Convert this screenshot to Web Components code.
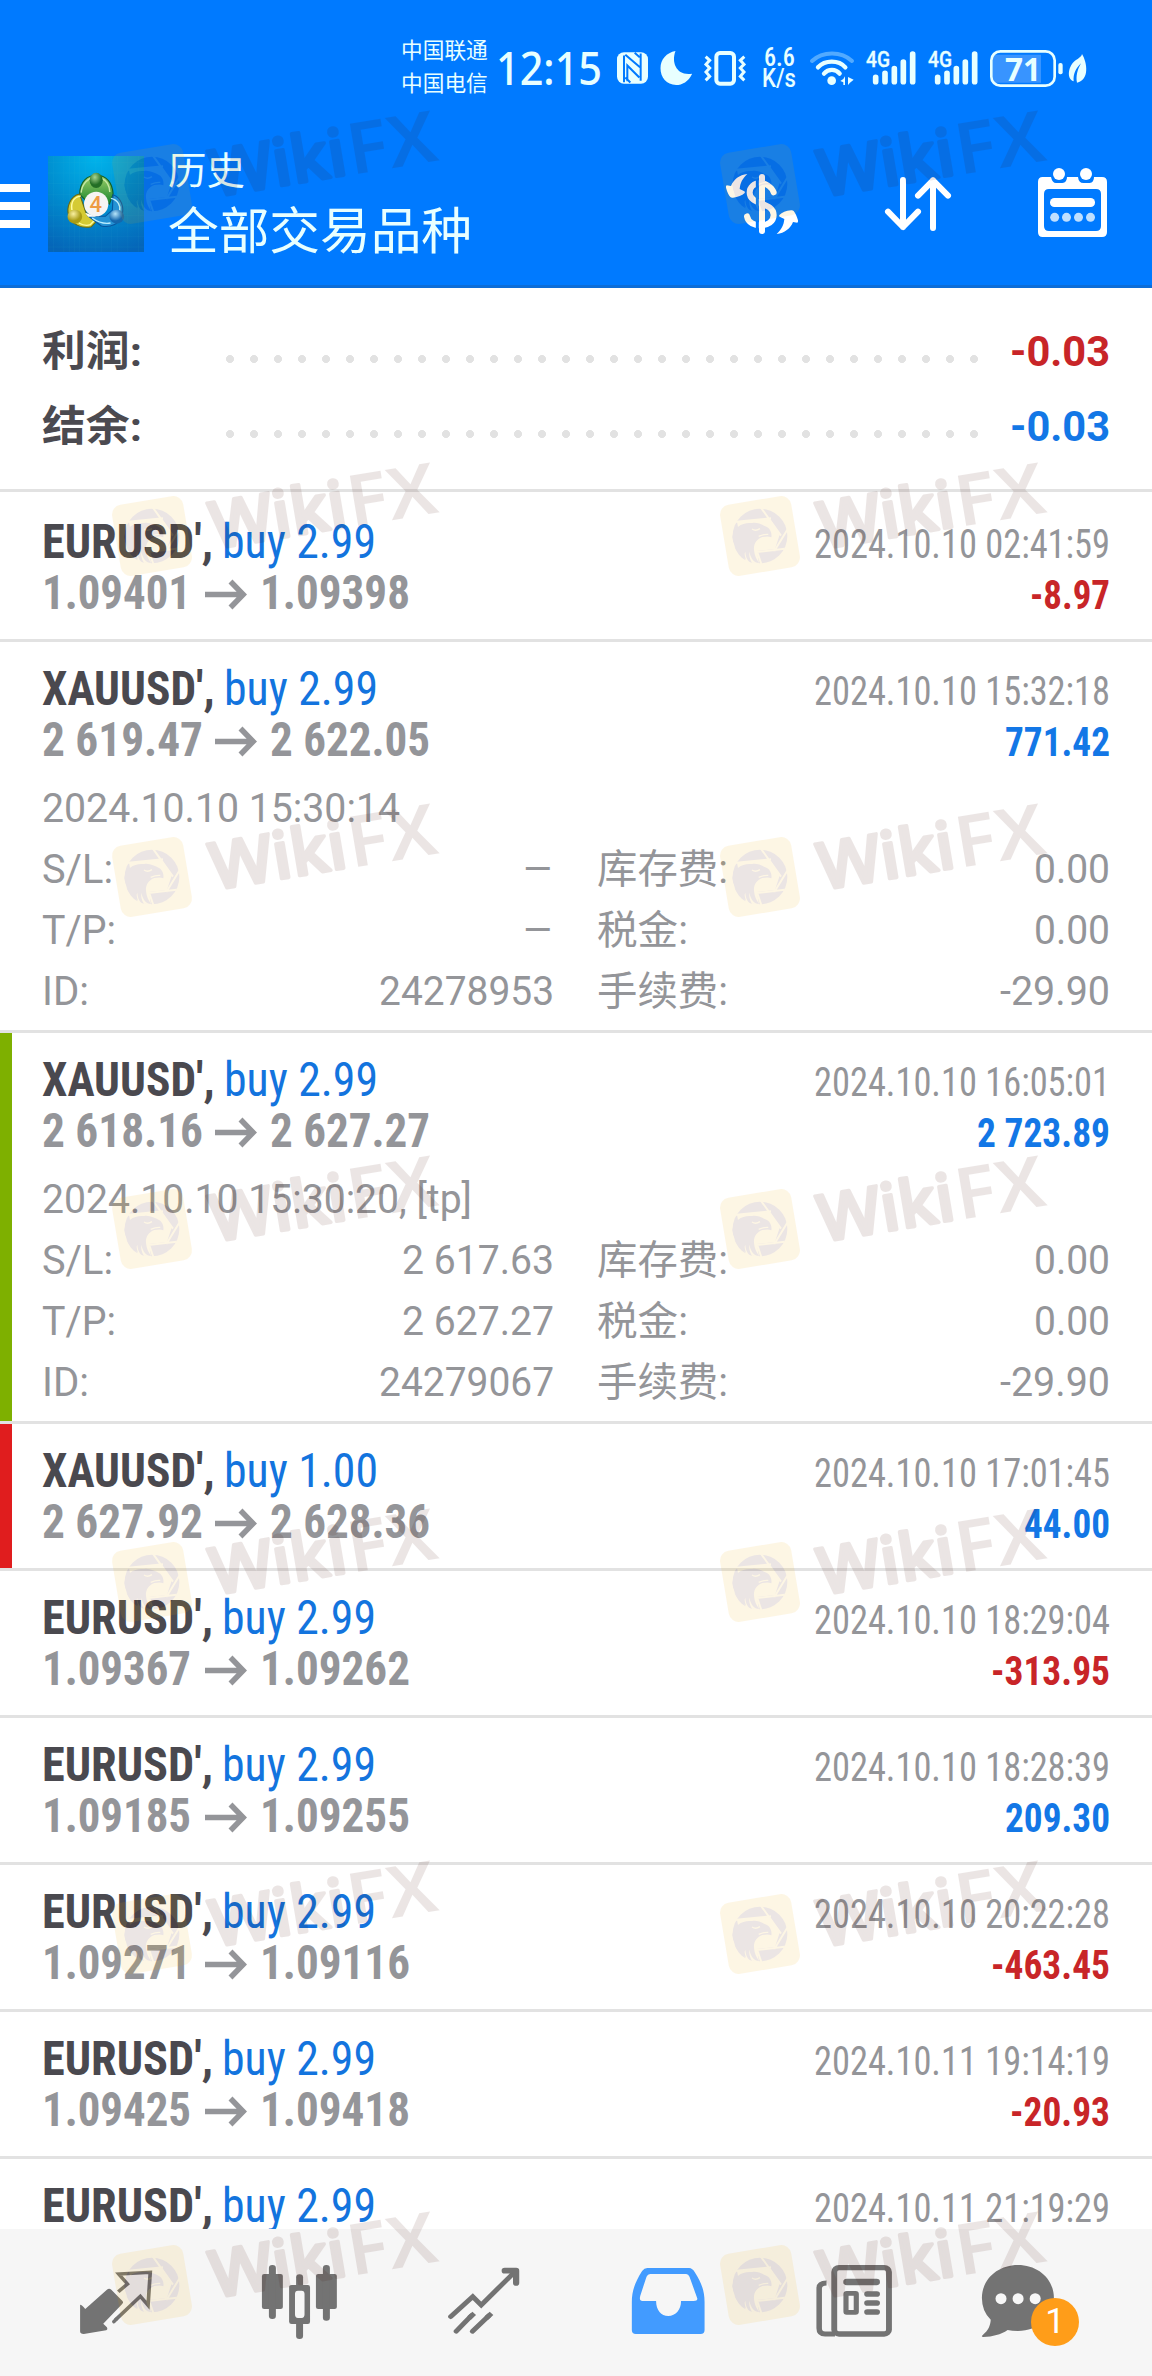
<!DOCTYPE html>
<html lang="zh-CN">
<head>
<meta charset="utf-8">
<title>历史</title>
<style>
html,body{margin:0;padding:0;background:#fff}
body{width:1152px;height:2376px;overflow:hidden;font-family:Roboto,"Noto Sans CJK SC",sans-serif}
</style>
</head>
<body>
<history-app></history-app>
<script>
const define = (name, html, setup) => {
  const t = document.createElement('template');
  t.innerHTML = html;
  customElements.define(name, class extends HTMLElement {
    connectedCallback() {
      if (this.shadowRoot) return;
      this.attachShadow({mode: 'open'}).append(t.content.cloneNode(true));
      if (setup) setup.call(this, this.shadowRoot);
    }
  });
};

/* One line of text, condensed to the width in its w attribute */
define('fit-text', `<style>
:host{display:block;white-space:nowrap;flex:none}
span{display:inline-block;transform-origin:0 50%;font-stretch:75%}
:host([normal]) span{font-stretch:100%}
</style><span><slot></slot></span>`, function (r) {
  const w = +this.getAttribute('w'), s = r.querySelector('span');
  this.style.width = w + 'px';
  s.style.transform = 'scaleX(' + w / s.getBoundingClientRect().width + ')';
});

define('signal-bars', `<style>
:host{display:block;width:51px;height:34px;flex:none}
svg{display:block;overflow:visible}
</style><svg width="51" height="34" viewBox="0 0 153 102"><g stroke="#e8ffff" stroke-width="17" stroke-linecap="round"><path d="M29 79V92M57 67V92M85 53V92M112 33V92M140 9V92"/></g>
<text x="0" y="48" textLength="72" lengthAdjust="spacingAndGlyphs" font-family="Roboto" font-weight="500" font-size="66" fill="#e8ffff" stroke="#e8ffff" stroke-width="1">4G</text></svg>`);

define('status-bar', `<style>
:host{display:flex;align-items:center;height:136px;color:#e8ffff;padding-left:401px;box-sizing:border-box}
svg{display:block;flex:none;overflow:visible}
.c{font:400 21.7px/33px "Noto Sans CJK SC",sans-serif;width:88px;margin-top:-6px}
.t{font:500 46px/54px "Noto Sans",sans-serif;margin:-2px 0 0 7px}
.n{display:flex;flex-direction:column;font:500 25px/21.5px Roboto,sans-serif;margin-left:16px;align-items:center;width:34px}
.b{position:relative;margin-left:11px;width:73px;height:37px}
.b fit-text{position:absolute;left:15px;top:0;font:700 33px/38px "Open Sans",sans-serif}
</style>
<div class="c"><div>中国联通</div><div>中国电信</div></div>
<fit-text normal class="t" w="106">12:15</fit-text>
<svg style="margin-left:15px" width="31" height="32" viewBox="715 94 93 95"><rect x="715" y="94" width="93" height="95" rx="21" fill="#e8ffff"/><path fill="none" stroke="#007aff" stroke-width="6" d="M736 104V184M740 102L784 139M786 98V180M746 181V134L782 170M768 96L783 109M740 170L755 185"/></svg>
<svg style="margin-left:12px" width="33" height="34" viewBox="0 0 96 102"><path fill="#e8ffff" d="M45 0C31 36 50 76 95 68C84 92 65 102 47 102C18 102 0 79 0 52C0 25 18 5 45 0Z"/></svg>
<svg style="margin-left:11px" width="42" height="35" viewBox="0 0 126 105" fill="none" stroke="#e8ffff"><rect x="37" y="6" width="53" height="92" rx="11" stroke-width="12"/><path stroke-width="9" d="M5 17L17 28L6 40L17 51L6 63L17 76L5 88M121 17L109 28L120 40L109 51L120 63L109 76L121 88"/></svg>
<div class="n"><fit-text w="31">6.6</fit-text><fit-text normal w="34">K/s</fit-text></div>
<svg style="margin-left:14px" width="44" height="34" viewBox="0 0 132 102" fill="none" stroke="#e8ffff" stroke-linecap="round"><path stroke="#52aaff" stroke-width="12" d="M6 30C38 0 94 0 126 30"/><path stroke-width="13" d="M24 49C45 26 86 26 106 49M42 68C55 53 77 53 89 68"/><circle cx="65" cy="89" r="13" fill="#e8ffff" stroke="none"/><path fill="#e8ffff" stroke="none" d="M105 76V102H100V94L91 90L100 84ZM114 78L131 86L120 95L114 102Z"/></svg>
<signal-bars style="margin-left:12px"></signal-bars>
<signal-bars style="margin-left:11px"></signal-bars>
<div class="b"><svg width="73" height="37" viewBox="0 0 219 111"><path fill="#3894ff" d="M15 14H153V98H15Q8 98 8 85V27Q8 14 15 14Z"/><rect x="4" y="4" width="190" height="103" rx="27" fill="none" stroke="#e8ffff" stroke-width="8"/><rect x="205" y="39" width="13" height="34" rx="6" fill="#e8ffff"/></svg><fit-text normal w="36">71</fit-text></div>
<svg style="margin-left:6px" width="18" height="29" viewBox="0 0 54 87"><path fill="#e8ffff" d="M39 0C55 26 62 78 24 86C20 68 25 47 36 28C20 44 12 60 14 82C-8 74-2 40 14 24C25 14 37 10 39 0Z"/></svg>`);

define('app-logo', `<style>:host{display:block;width:96px;height:96px;flex:none}svg{display:block}</style>
<svg width="96" height="96" viewBox="131 138 261 288" preserveAspectRatio="none">
<defs><radialGradient id="bg" cx=".5" cy="0" r="1.05"><stop offset="0" stop-color="#00b4ec"/><stop offset=".5" stop-color="#008fd0"/><stop offset="1" stop-color="#0565b8"/></radialGradient>
<linearGradient id="gr" x2="0" y2="1"><stop offset="0" stop-color="#9fcf68"/><stop offset="1" stop-color="#16852f"/></linearGradient>
<radialGradient id="gb" cx=".4" cy=".3"><stop offset="0" stop-color="#a8d590"/><stop offset="1" stop-color="#236e25"/></radialGradient>
<radialGradient id="yb" cx=".4" cy=".3"><stop offset="0" stop-color="#f9f0a0"/><stop offset="1" stop-color="#a99c15"/></radialGradient>
<radialGradient id="bb" cx=".4" cy=".3"><stop offset="0" stop-color="#b5e4fa"/><stop offset="1" stop-color="#1467ad"/></radialGradient></defs>
<path fill="url(#bg)" d="M131 138h261v288H131z"/>
<path stroke="#5cc8e2" stroke-opacity=".18" d="M146 138V426M174 138V426M189 138V426M203 138V426M217 138V426M232 138V426M261 138V426M276 138V426M304 138V426M319 138V426M348 138V426M377 138V426M131 157H392M131 189H392M131 221H392M131 253H392M131 285H392M131 316H392M131 348H392M131 379H392M131 411H392"/>
<path d="M217 253C218 212 240 196 262 196C290 196 306 218 308 252L298 282L268 250L240 278Z" fill="url(#gr)" stroke="#145f25" stroke-width="3"/>
<path d="M221 248C224 216 244 205 252 204M299 246C298 225 288 211 278 206" fill="none" stroke="#c6e8a4" stroke-width="4"/>
<path d="M217 252C190 258 181 294 187 316C195 344 224 357 249 350L266 330L234 308Z" fill="#d5cb34" stroke="#6a6911" stroke-width="3"/>
<path d="M196 300C192 270 207 260 220 258M215 339Q232 350 246 344L258 330" fill="none" stroke="#fffba0" stroke-width="4"/>
<path d="M308 254C330 263 339 292 332 316C324 343 301 354 276 348L240 318L287 319L306 300Z" fill="#2592d4" stroke="#0757a1" stroke-width="3"/>
<path d="M302 265C322 269 329 290 326 302M251 324Q276 344 301 339" fill="none" stroke="#b8edff" stroke-width="4"/>
<path fill="#fff" d="M232 308L263 320L240 320Z"/><ellipse cx="262" cy="211" rx="18" ry="23" fill="url(#gb)"/><ellipse cx="204" cy="320" rx="20" ry="21" fill="url(#yb)"/><ellipse cx="318" cy="320" rx="20" ry="21" fill="url(#bb)"/>
<ellipse cx="262" cy="282" rx="33" ry="37" fill="#f6f4f3"/><text x="244" y="305" textLength="34" lengthAdjust="spacingAndGlyphs" font-family="Roboto" font-weight="500" font-size="67" fill="#ed9b45">4</text></svg>`);

define('tool-bar', `<style>
:host{display:flex;align-items:center;height:136px;padding-bottom:13px}
svg{display:block;flex:none;overflow:visible}
.m{display:grid;gap:10px;width:30px;margin-top:4px}.m i{height:8px;background:#fff}
app-logo{margin-left:18px}
.t{color:#e8ffff;font-family:"Noto Sans CJK SC",sans-serif;margin:-9px auto 0 24px}
.a{font-size:38px;line-height:50px}.b{font-size:50px;line-height:60px;margin-top:4px}
</style>
<div class="m"><i></i><i></i><i></i></div><app-logo></app-logo>
<div class="t"><fit-text normal class="a" w="77">历史</fit-text><fit-text normal class="b" w="304">全部交易品种</fit-text></div>
<svg width="72" height="60" viewBox="198 192 216 180"><path fill="none" stroke="#fff" stroke-width="18" stroke-linecap="round" d="M341 247C326 210 269 211 269 248C269 286 341 275 341 315C341 355 268 357 261 319"/><path stroke="#007aff" stroke-width="9" d="M292 196V368"/><path stroke="#fff" stroke-width="18" stroke-linecap="round" d="M306 201V363"/><path id="w" fill="#fff" d="M262 192C238 195 221 208 213 228L200 226Q197 228 198 233C202 247 206 255 211 261Q214 264 219 263C234 262 246 256 254 249Q256 246 253 244L239 237C241 217 247 207 262 192Z"/><use href="#w" transform="rotate(180 306 282)"/></svg>
<svg style="margin-left:87px" width="66" height="54" viewBox="675 201 198 162" fill="none" stroke="#fff" stroke-width="18" stroke-linecap="round" stroke-linejoin="round"><path d="M729 210V351M684 305L729 351L774 305M819 354V211M774 257L819 211L864 257"/></svg>
<svg style="margin:-3px 45px 0 87px" width="69" height="69" viewBox="1134 174 207 207"><path fill="#fff" fill-rule="evenodd" d="M1148 201H1173Q1177 219 1188 219H1207Q1221 218 1221 201H1254Q1256 219 1270 219H1289Q1302 218 1302 201H1326Q1341 201 1341 216V366Q1341 381 1326 381H1148Q1134 381 1134 366V216Q1134 201 1148 201ZM1167 237Q1152 237 1152 252V348Q1152 363 1167 363H1308Q1323 363 1323 348V252Q1323 237 1308 237Z"/><circle cx="1197" cy="192" r="18" fill="#fff"/><circle cx="1278" cy="192" r="18" fill="#fff"/><rect x="1170" y="264" width="135" height="27" rx="13" fill="#fff"/><g fill="#bfdfff"><circle cx="1184" cy="322" r="13.5"/><circle cx="1219.500" cy="322" r="13.5"/><circle cx="1255.500" cy="322" r="13.5"/><circle cx="1291.500" cy="322" r="13.5"/></g></svg>`);

const arrow = '<svg width="42" height="51" viewBox="0 0 42 51" fill="none" stroke="#949599" stroke-width="5.500"><path d="M0 27.500H38M25.500 14.500L38.200 27.500L25.500 40.500"/></svg>';
const ft = (cls, w, text, normal) => `<fit-text ${normal ? 'normal' : ''} class="${cls}" w="${w}">${text}</fit-text>`;

define('summary-line', `<style>
:host{display:flex;align-items:center;height:75px;line-height:75px;font-size:42px;font-weight:700;padding:0 42px;color:#4b4a50}
.l{font-size:41.500px}
.d{width:768px;height:8px;margin:15px 0 0 76px;background:radial-gradient(circle,#e2e2e2 3.7px,transparent 4.3px) 0 0/24px 8px}
.v{margin-left:auto;color:var(--c)}
</style><div class="d"></div>`, function (r) {
  const d = r.querySelector('.d'), box = document.createElement('template');
  box.innerHTML = ft('l', 100, this.getAttribute('label'), 1);
  d.before(box.content);
  box.innerHTML = ft('v', 100, this.getAttribute('value'), 1);
  d.after(box.content);
});

define('trade-row', `<style>
:host{display:block;position:relative;border-bottom:3px solid #e2e2e2;box-sizing:border-box;padding:21px 42px 0;height:147px;color:#949599}
:host([open]){height:391px}
:host([bar])::before{content:"";position:absolute;left:0;top:0;bottom:0;width:12px;background:var(--bar)}
.top{display:flex;justify-content:space-between;height:102px}
.l{font-size:48px;line-height:51px}.l>div{display:flex}
.s{font-weight:700;color:#4a494f}.y{color:#1374de;margin-left:9px}
.p{font-weight:700}.p svg{flex:none;display:block}
.r{display:flex;flex-direction:column;align-items:flex-end;font-size:40px;line-height:51px;margin-top:3px}
.v{font-weight:700;color:var(--c)}
.x{margin-top:13px;font-size:40px;line-height:61px}
.g{display:grid;grid-template-columns:512px 513px;column-gap:43px}
.g>div{display:flex;justify-content:space-between}
</style>
<div class="top"><div class="l"><div class="n"></div><div class="p"></div></div><div class="r"></div></div>`);

const trades = [
  {s:"EURUSD'", q:'2.99', a:'1.09401', b:'1.09398', d:'2024.10.10 02:41:59', v:'-8.97', w:80},
  {s:"XAUUSD'", q:'2.99', a:'2 619.47', b:'2 622.05', d:'2024.10.10 15:32:18', v:'771.42', w:105, o:'2024.10.10 15:30:14', ow:358, sl:['–',32], tp:['–',32], id:'24278953'},
  {s:"XAUUSD'", q:'2.99', a:'2 618.16', b:'2 627.27', d:'2024.10.10 16:05:01', v:'2 723.89', w:133, o:'2024.10.10 15:30:20, [tp]', ow:430, sl:['2 617.63',152], tp:['2 627.27',152], id:'24279067', bar:'#7eb000'},
  {s:"XAUUSD'", q:'1.00', a:'2 627.92', b:'2 628.36', d:'2024.10.10 17:01:45', v:'44.00', w:86, bar:'#e01d1e'},
  {s:"EURUSD'", q:'2.99', a:'1.09367', b:'1.09262', d:'2024.10.10 18:29:04', v:'-313.95', w:119},
  {s:"EURUSD'", q:'2.99', a:'1.09185', b:'1.09255', d:'2024.10.10 18:28:39', v:'209.30', w:105},
  {s:"EURUSD'", q:'2.99', a:'1.09271', b:'1.09116', d:'2024.10.10 20:22:28', v:'-463.45', w:119},
  {s:"EURUSD'", q:'2.99', a:'1.09425', b:'1.09418', d:'2024.10.11 19:14:19', v:'-20.93', w:100},
  {s:"EURUSD'", q:'2.99', a:'', b:'', d:'2024.10.11 21:19:29', v:'', w:0}
];

define('trade-list', `<style>:host{display:block;padding-top:3px;height:1734px;overflow:hidden}</style>`, function (r) {
  for (const t of trades) {
    const el = document.createElement('trade-row');
    if (t.bar) { el.setAttribute('bar', ''); el.style.setProperty('--bar', t.bar); }
    if (t.o) el.setAttribute('open', '');
    el.style.setProperty('--c', t.v[0] === '-' ? '#c82528' : '#1377e6');
    r.append(el);
    const q = c => el.shadowRoot.querySelector(c), x = t.s[0] === 'X';
    q('.n').innerHTML = ft('s', x ? 172.500 : 171, t.s + ',') + ft('y', 154, 'buy ' + t.q);
    q('.p').innerHTML = t.a ? ft('', x ? 161 : 149, t.a) + `<span style="width:${x ? 12 : 14}px"></span>` + arrow + `<span style="width:13px"></span>` + ft('', x ? 160 : 150, t.b) : '';
    q('.r').innerHTML = ft('', 296, t.d) + (t.v ? ft('v', t.w, t.v) : '');
    if (t.o) {
      const cell = (a, aw, b, bw) => `<div>${ft('', aw, a, 1)}${ft('', bw, b, 1)}</div>`;
      const box = document.createElement('div');
      box.className = 'x';
      box.innerHTML = ft('', t.ow, t.o, 1) + '<div class="g">' +
        cell('S/L:', 71, ...t.sl) + cell('库存费:', 131, '0.00', 76) +
        cell('T/P:', 74, ...t.tp) + cell('税金:', 91, '0.00', 76) +
        cell('ID:', 47, t.id, 175) + cell('手续费:', 131, '-29.90', 110) + '</div>';
      el.shadowRoot.append(box);
    }
  }
});

define('nav-bar', `<style>
:host{display:flex;height:147px;background:#f6f6f6;padding:0 24px;color:#737373}
svg{display:block;flex:none;width:184px;height:147px}
.last{position:relative}
.badge{position:absolute;left:87px;top:69px;width:48px;height:48px;border-radius:50%;background:#ff9d19;color:#fff;font:400 35px/48px Roboto,sans-serif;text-align:center}
</style>
<svg viewBox="65.3 87 500.900 441" preserveAspectRatio="none"><path fill="currentColor" d="M218 315Q220 312 232 327L291 269Q297 264 303 269L334 304Q337 308 332 313L281 371L291 382Q294 389 289 391L228 402Q218 402 218 394Z"/><g fill="none" stroke="currentColor"><path stroke-width="10" d="M322 275L347 252L323 222L409 217L403 316L382 289L314 360"/><path stroke-width="10" stroke-linecap="round" d="M310 365L317 357"/></g></svg>
<svg viewBox="566.200 87 500.900 441" preserveAspectRatio="none"><g fill="currentColor"><rect x="713" y="222" width="57" height="105" rx="6"/><rect x="732" y="195" width="19" height="162" rx="9"/><rect x="860" y="222" width="57" height="105" rx="6"/><rect x="879" y="195" width="19" height="167" rx="9"/><rect x="806" y="223" width="19" height="42" rx="9"/><rect x="806" y="361" width="19" height="56" rx="9"/><path fill-rule="evenodd" d="M794 255H838Q844 255 844 262V365Q844 372 838 372H794Q787 372 787 365V262Q787 255 794 255ZM811 272Q803 272 803 282V343Q803 354 811 354H821Q829 354 829 343V282Q829 272 821 272Z"/></g></svg>
<svg viewBox="1067.100 87 500.900 441" preserveAspectRatio="none" fill="none" stroke="currentColor" stroke-width="14"><path stroke-linecap="round" d="M1227 350L1287 290L1310 315L1401 216"/><path stroke-linecap="round" stroke-width="17" stroke-linejoin="round" d="M1374 212H1405V249"/><path stroke-linecap="round" d="M1242 394L1283 347M1286 394L1331 347"/><path d="M1277 354L1291 340M1324 354L1338 340"/></svg>
<svg viewBox="0 87 500.900 441" preserveAspectRatio="none"><path fill="#429bff" fill-rule="evenodd" d="M194 204H308Q317 205 323 216C342 249 350 273 350 306V390Q350 402 339 402H163Q152 402 152 390V306C152 276 159 249 180 213Q186 204 194 204ZM202 222Q195 222 192 230L175 287Q171 303 181 303H218C218 331 232 348 251 348C272 348 286 329 286 303H320Q332 303 330 295L309 230Q306 222 300 222Z"/></svg>
<svg viewBox="500.900 87 500.900 441" preserveAspectRatio="none" fill="none" stroke="currentColor" stroke-width="16"><rect x="703" y="203" width="149" height="199" rx="13"/><path d="M682 249Q662 249 662 265V385Q662 402 678 402H705" stroke-width="15"/><path stroke-linecap="round" d="M737 246H818" stroke-width="19"/><path stroke-linecap="round" d="M793 282H819M793 309H819M793 336H819" stroke-width="17"/><rect x="735" y="280" width="28" height="57" rx="2" stroke-width="14"/></svg>
<div class="last"><svg viewBox="1001.800 87 500.900 441" preserveAspectRatio="none"><path fill="currentColor" d="M1203 195C1258 195 1301 237 1301 294C1301 351 1258 393 1203 393Q1187 393 1175 390C1156 404 1135 410 1109 411Q1101 411 1108 404C1122 391 1128 377 1129 359Q1105 334 1105 294C1105 237 1149 195 1203 195Z"/><g fill="#f7f7f7"><ellipse cx="1157" cy="296" rx="15" ry="16.500"/><ellipse cx="1203.500" cy="296" rx="15" ry="16.500"/><ellipse cx="1250" cy="296" rx="15" ry="16.500"/></g></svg><div class="badge">1</div></div>`);

define('wiki-mark', `<style>
:host{display:block;position:absolute;opacity:.1;pointer-events:none;width:0;height:0}
svg{display:block;overflow:visible}
</style><svg width="1" height="1"><rect x="-36" y="-36" width="72" height="72" rx="10" fill="#f3ab00" transform="rotate(-9.500)"/>
<g transform="scale(.3333) translate(-181 -289)"><circle cx="181" cy="289" r="82" fill="#420a00"/>
<path fill="#f3ab00" d="M112 246L211 237L240 285L226 328L172 334L178 373L140 365L120 290Z"/>
<path stroke="#f3ab00" stroke-width="6" d="M95 248L214 236M181 200L244 288M268 262L224 334M164 338L255 327M172 335L186 376"/>
<path fill="#420a00" d="M98 292C102 262 128 247 158 250C172 247 190 256 202 262C213 268 217 282 215 293C206 288 196 291 188 292C172 298 161 311 163 331C164 346 170 359 178 370C164 370 153 356 149 336C147 350 152 362 157 369C143 367 138 351 137 336C132 345 133 355 138 362C121 353 111 337 105 322L113 325C104 315 99 303 98 292Z"/>
<path fill="none" stroke="#f3ab00" stroke-width="4" d="M157 268Q168 276 181 267M177 290Q192 283 206 284"/></g>
<g transform="rotate(-9.500)" fill="#420a00" font-family="Noto Sans,sans-serif"><text x="59" y="23" font-size="65" font-weight="500" textLength="137" lengthAdjust="spacingAndGlyphs" stroke="#420a00" stroke-width="3.500" stroke-linejoin="round">Wiki</text><text x="198" y="24" font-size="71" font-weight="600" textLength="90" lengthAdjust="spacingAndGlyphs">FX</text></g></svg>`);

define('history-app', `<style>
:host{display:flex;flex-direction:column;position:relative;width:1152px;height:2376px;overflow:hidden;background:#fff}
header{background:#007aff;border-bottom:3px solid #0c6dd8}
.sum{padding:26px 0 25px;border-bottom:3px solid #e2e2e2}
</style>
<header><status-bar></status-bar><tool-bar></tool-bar></header>
<div class="sum"><summary-line label="利润:" value="-0.03" style="--c:#c82528"></summary-line><summary-line label="结余:" value="-0.03" style="--c:#1377e6"></summary-line></div>
<trade-list></trade-list><nav-bar></nav-bar>`, function (r) {
  for (const y of [183.500, 536.300, 877, 1229, 1581.500, 1934, 2284.500]) for (const x of [152.300, 760.300]) {
    const m = document.createElement('wiki-mark');
    m.style.left = x + 'px'; m.style.top = y + 'px';
    r.append(m);
  }
});
</script>
</body>
</html>
